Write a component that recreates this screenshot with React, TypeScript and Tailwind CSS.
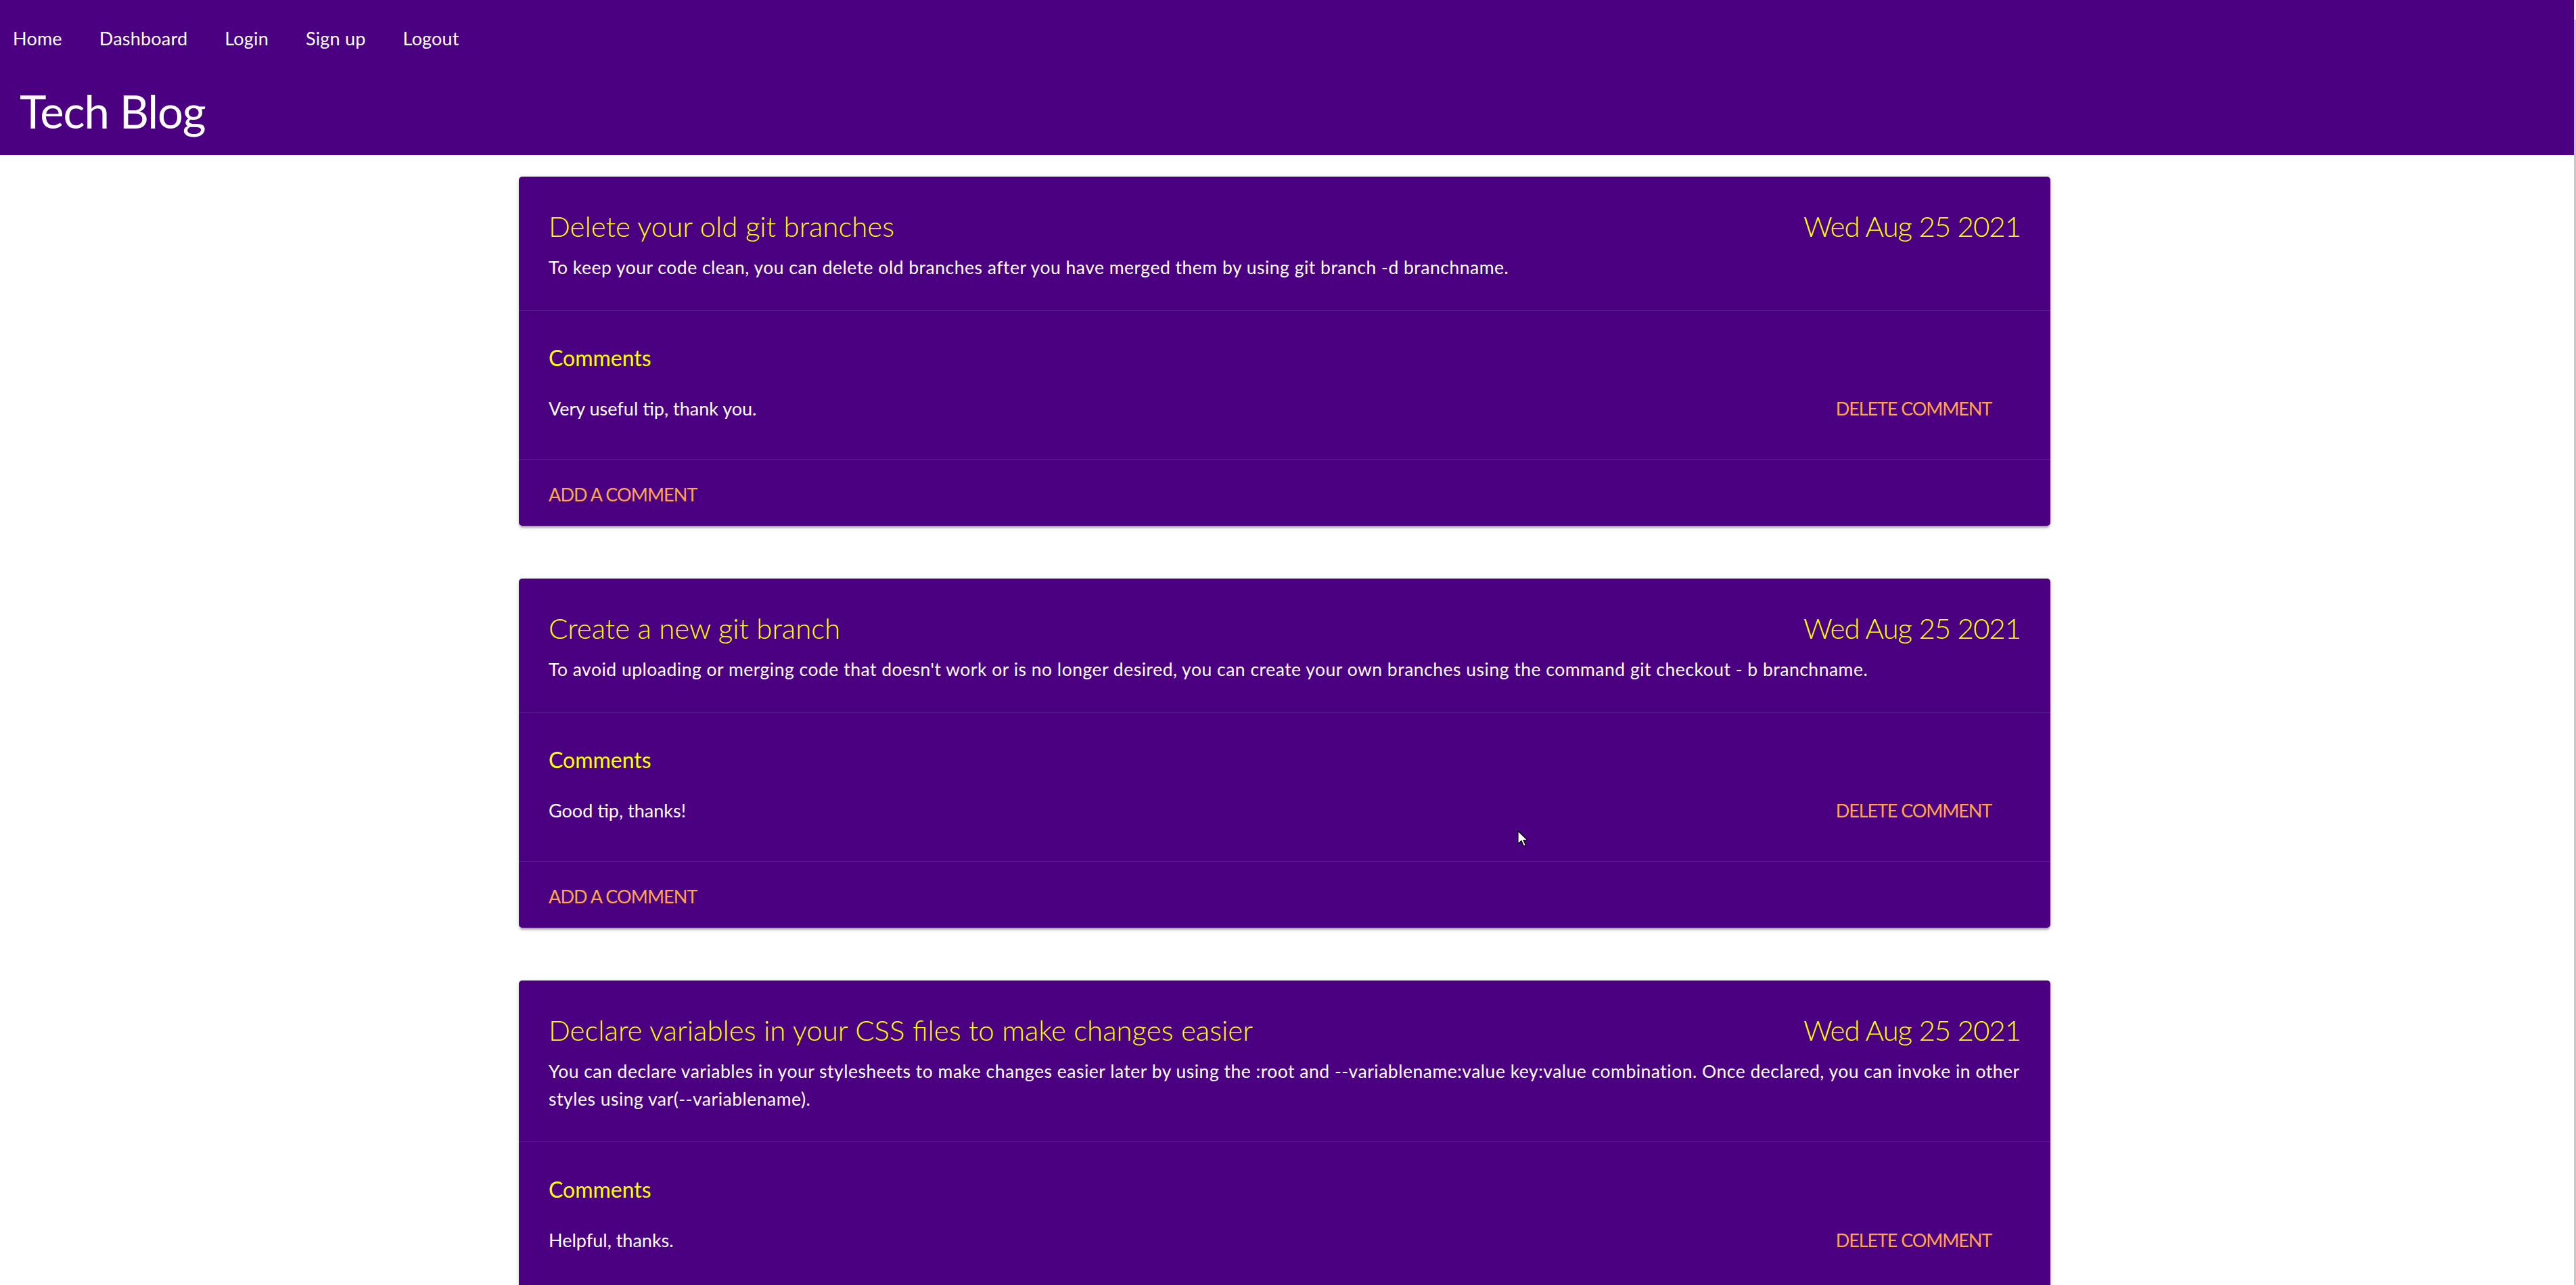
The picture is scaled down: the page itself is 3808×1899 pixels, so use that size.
import React from "react";

type Post = {
  title: string;
  date: string;
  body: React.ReactNode;
  comment: string;
};

const posts: Post[] = [
  {
    title: "Delete your old git branches",
    date: "Wed Aug 25 2021",
    body: "To keep your code clean, you can delete old branches after you have merged them by using git branch -d branchname.",
    comment: "Very useful tip, thank you.",
  },
  {
    title: "Create a new git branch",
    date: "Wed Aug 25 2021",
    body: "To avoid uploading or merging code that doesn't work or is no longer desired, you can create your own branches using the command git checkout - b branchname.",
    comment: "Good tip, thanks!",
  },
  {
    title: "Declare variables in your CSS files to make changes easier",
    date: "Wed Aug 25 2021",
    body: (
      <>
        You can declare variables in your stylesheets to make changes easier later by using the :root and --variablename:value key:value combination. Once declared, you can invoke in other
        <br />
        styles using var(--variablename).
      </>
    ),
    comment: "Helpful, thanks.",
  },
];

function Card({ post }: { post: Post }) {
  return (
    <div className="w-[2264px] mx-auto bg-[#4b0082] rounded-[5px] shadow-[0_5px_3px_-2px_rgba(0,0,0,0.2),0_2px_3px_0_rgba(0,0,0,0.14),0_2px_8px_0_rgba(0,0,0,0.12)]">
      <div className="pt-[47px] px-[44px] pb-[42px]">
        <div className="flex justify-between items-center h-[52px]">
          <h2 className="text-[42px] leading-[52px] font-light text-[#ffff00]">{post.title}</h2>
          <span className="text-[42px] leading-[52px] font-light tracking-[-1px] text-[#ffff00]">{post.date}</span>
        </div>
        <p className="mt-[15px] text-[26.5px] leading-[41px] tracking-[0.5px] text-white">{post.body}</p>
      </div>
      <div className="h-px bg-[#5d2294]" />
      <div className="pt-[50px] pb-[51px] px-[44px]">
        <h3 className="text-[32px] leading-[40px] text-[#ffff00]">Comments</h3>
        <div className="mt-[31px] h-[48px] flex items-center justify-between">
          <span className="text-[27px] text-white">{post.comment}</span>
          <button className="mr-[43px] text-[27px] uppercase tracking-[-1.1px] text-[#ffa64d]">Delete Comment</button>
        </div>
      </div>
      <div className="h-px bg-[#5d2294]" />
      <div className="pt-[31px] pb-[26px] px-[44px]">
        <button className="block text-[27px] leading-[40px] uppercase tracking-[-0.9px] text-[#ffa64d]">Add a Comment</button>
      </div>
    </div>
  );
}

export default function App() {
  return (
    <div className="relative min-h-screen bg-white font-['Lato',_'Open_Sans',_sans-serif] flex">
      <div className="w-[3805px] shrink-0">
        <header className="bg-[#4b0082] h-[229px] pt-[37px]">
          <nav className="flex gap-[55px] pl-[19px] h-[40px] items-center">
            {["Home", "Dashboard", "Login", "Sign up", "Logout"].map((n) => (
              <a key={n} className="text-[27px] leading-[40px] tracking-[0.2px] text-white">
                {n}
              </a>
            ))}
          </nav>
          <h1 className="mt-[47px] pl-[29px] text-[67px] leading-[80px] tracking-[-1.1px] text-white">Tech Blog</h1>
        </header>
        <main className="pt-[32px] pr-[7px] flex flex-col gap-[78px] pb-[80px]">
          {posts.map((p, i) => (
            <Card key={i} post={p} />
          ))}
        </main>
      </div>
      <div className="w-[3px] shrink-0 bg-[#f4f4f4] pt-[29px]">
        <div className="w-[3px] h-full bg-[#c8c8c8]" />
      </div>
      <svg
        className="absolute left-[2243px] top-[1227px]"
        width="20"
        height="28"
        viewBox="0 0 20 28"
      >
        <path d="M1 1 L1 20 L6 15.5 L9.5 23.5 L12.5 22.3 L9 14.5 L15 14.5 Z" fill="#fff" stroke="#000" strokeWidth="1.2" strokeLinejoin="round" />
      </svg>
    </div>
  );
}
